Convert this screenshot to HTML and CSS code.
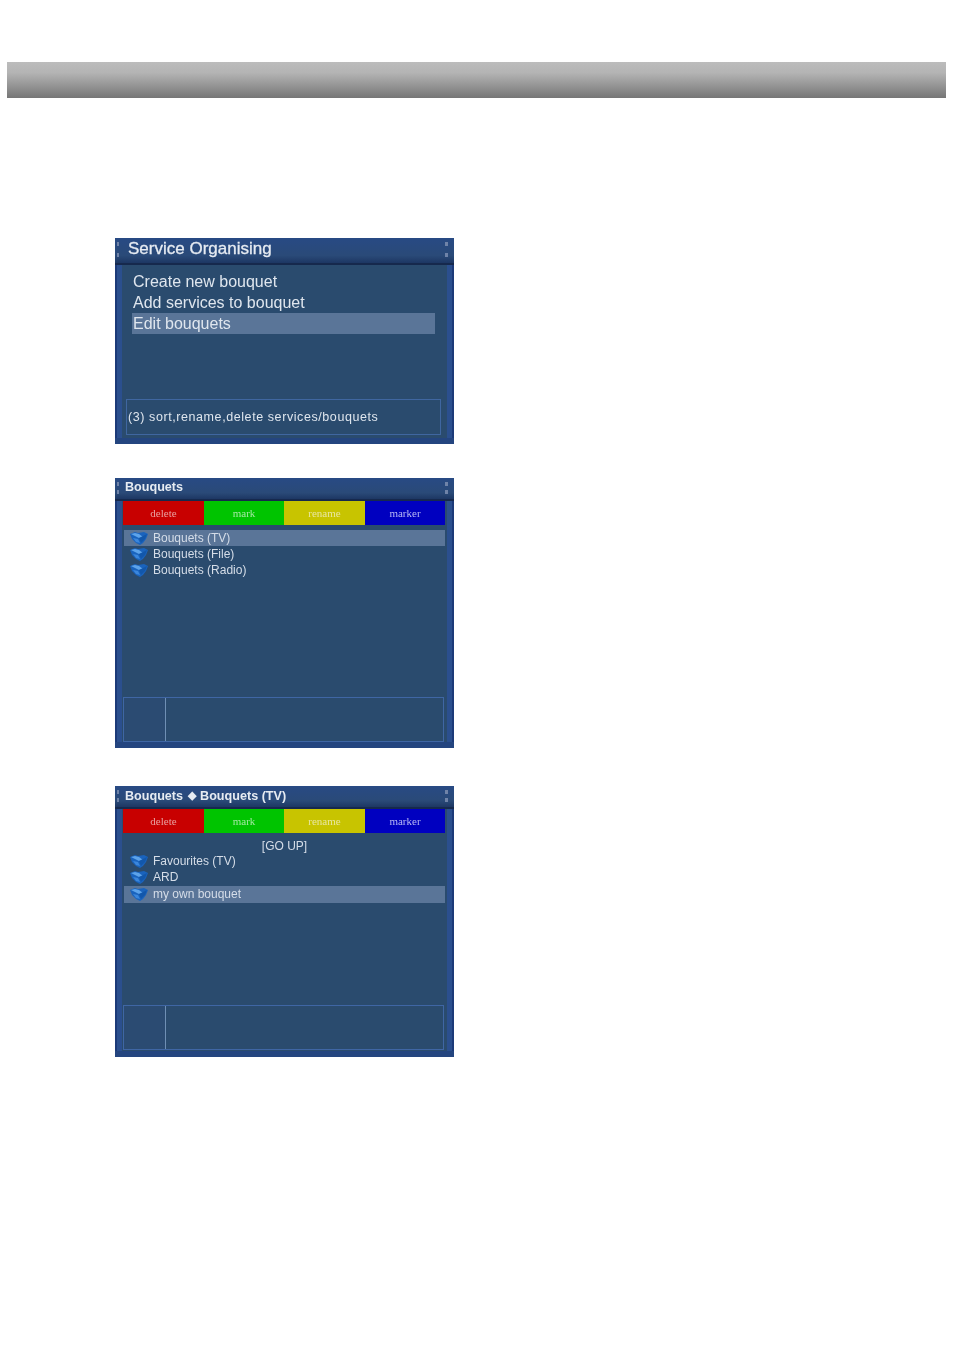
FILE: index.html
```html
<!DOCTYPE html>
<html lang="en">

<head>
    <meta charset="UTF-8" />
    <title>Service Organising</title>
    <link rel="stylesheet" href="styles.css">
</head>

<body>
    <svg class="icon-defs" width="0" height="0">
        <symbol id="folder" viewBox="0 0 18 14">
            <path d="M0 3 L5 1 L8 2 L14 1 L18 3 L16 8 L13 12 L10 14 L6 12 L2 8 Z" fill="#1a63bd" />
            <path d="M1 3 L5 2 L9 3 L13 6 L9 7 L5 5 Z" fill="#5da3ea" />
            <path d="M9 7 L17 3 L15 8 L11 12 Z" fill="#1257ab" />
            <path d="M3 7 L8 8 L10 12 L6 11 Z" fill="#3a86dc" />
        </symbol>
    </svg>

    <div class="top-bar"></div>

    <div class="screens">
        <div class="screen screen-menu">
            <div class="grips"></div>
            <div class="title title-large">Service Organising</div>
            <div class="menu-panel">
                <div class="menu-item">Create new bouquet</div>
                <div class="menu-item">Add services to bouquet</div>
                <div class="menu-item selected">Edit bouquets</div>
            </div>
            <div class="help-box">(3) sort,rename,delete services/bouquets</div>
        </div>

        <div class="screen screen-list">
            <div class="grips"></div>
            <div class="title">Bouquets</div>
            <div class="buttons">
                <div class="btn btn-red">delete</div>
                <div class="btn btn-green">mark</div>
                <div class="btn btn-yellow">rename</div>
                <div class="btn btn-blue">marker</div>
            </div>
            <div class="list">
                <div class="row selected"><svg class="folder"><use href="#folder" /></svg>Bouquets (TV)</div>
                <div class="row"><svg class="folder"><use href="#folder" /></svg>Bouquets (File)</div>
                <div class="row"><svg class="folder"><use href="#folder" /></svg>Bouquets (Radio)</div>
            </div>
            <div class="info-box">
                <div class="info-left"></div>
                <div class="info-right"></div>
            </div>
        </div>

        <div class="screen screen-list">
            <div class="grips"></div>
            <div class="title">Bouquets <span class="title-arrow">◆</span> Bouquets (TV)</div>
            <div class="buttons">
                <div class="btn btn-red">delete</div>
                <div class="btn btn-green">mark</div>
                <div class="btn btn-yellow">rename</div>
                <div class="btn btn-blue">marker</div>
            </div>
            <div class="list">
                <div class="row go-up">[GO UP]</div>
                <div class="row"><svg class="folder"><use href="#folder" /></svg>Favourites (TV)</div>
                <div class="row"><svg class="folder"><use href="#folder" /></svg>ARD</div>
                <div class="row selected"><svg class="folder"><use href="#folder" /></svg>my own bouquet</div>
            </div>
            <div class="info-box">
                <div class="info-left"></div>
                <div class="info-right"></div>
            </div>
        </div>
    </div>
</body>

</html>
```

FILE: styles.css
```css
body {
    margin: 0;
    background: #fff;
    font-family: 'Liberation Sans', Arial, sans-serif;
    color: #dfe6ee;
}

.icon-defs {
    position: absolute;
}

.top-bar {
    height: 36px;
    margin: 62px 8px 0 7px;
    background: linear-gradient(#bcbcbc, #b4b4b4 30%, #767676);
}

.screens {
    display: flex;
    flex-direction: column;
    gap: 34px;
    width: 339px;
    margin: 140px 0 0 115px;
}

.screen {
    position: relative;
    display: flex;
    flex-direction: column;
    box-sizing: border-box;
    padding: 0 7px;
    border-bottom: 6px solid #24457f;
    background: linear-gradient(90deg, #1c3a78 0 2px, #2b4f8e 2px 7px, #2a4b6e 7px calc(100% - 7px), #2b4f8e calc(100% - 7px) calc(100% - 2px), #1c3a78 calc(100% - 2px));
    --grip-low: 9px;
}

.screen-menu {
    height: 206px;
    --grip-low: 12px;
}

.screen-list {
    height: 270px;
}

.screen-list:last-child {
    height: 271px;
    margin-top: 4px;
}

/* little dots in the title corners */
.grips {
    position: absolute;
    z-index: 1;
    top: 3px;
    left: 2px;
    right: 6px;
    height: 18px;
    background:
        linear-gradient(#6f83a8, #6f83a8) left 0 top 1px / 2px 4px no-repeat,
        linear-gradient(#6f83a8, #6f83a8) left 0 top var(--grip-low) / 2px 4px no-repeat,
        linear-gradient(#6f83a8, #6f83a8) right 0 top 1px / 3px 4px no-repeat,
        linear-gradient(#6f83a8, #6f83a8) right 0 top var(--grip-low) / 3px 4px no-repeat;
    filter: blur(0.5px);
}

.title {
    height: 21px;
    margin: 0 -7px;
    padding-left: 10px;
    background: linear-gradient(#284a84, #2a4a78 70%, #1d3763);
    border-bottom: 2px solid #16294d;
    font-size: 12.6px;
    font-weight: bold;
    line-height: 18px;
    color: #e6ebf2;
    filter: blur(0.4px);
}

.title-arrow {
    margin: 0 1px;
    font-size: 11px;
    vertical-align: 1px;
}

.title-large {
    height: 25px;
    padding-left: 13px;
    font-size: 17px;
    font-weight: normal;
    line-height: 22px;
    -webkit-text-stroke: 0.3px #e6ebf2;
}

.menu-panel {
    height: 134px;
    padding: 6px 12px 0 10px;
    box-sizing: border-box;
}

.menu-item {
    height: 21px;
    padding-left: 1px;
    font-size: 16px;
    line-height: 21px;
    filter: blur(0.4px);
}

.help-box {
    height: 36px;
    margin: 0 6px 0 4px;
    padding-left: 1px;
    box-sizing: border-box;
    border: 1px solid #3f66a0;
    font-size: 12.5px;
    letter-spacing: 0.58px;
    line-height: 34px;
    white-space: nowrap;
    filter: blur(0.4px);
}

.selected {
    background: #5a7598;
}

.buttons {
    display: grid;
    grid-template-columns: 81px 80px 81px 80px;
    height: 24px;
    margin: 0 2px 0 1px;
}

.btn {
    font-family: 'Liberation Serif', serif;
    font-size: 11px;
    line-height: 24px;
    text-align: center;
    filter: blur(0.5px);
}

.btn-red {
    background: #c80000;
    color: #e8a0a0;
}

.btn-green {
    background: #00c400;
    color: #a0e8a0;
}

.btn-yellow {
    background: #c8c400;
    color: #e8e6a0;
}

.btn-blue {
    background: #0000c0;
    color: #b8b8f4;
}

.list {
    flex: 1;
    margin: 5px 2px 0 2px;
}

.row {
    display: flex;
    align-items: center;
    box-sizing: border-box;
    height: 16.4px;
    padding: 0 0 1px 6px;
    font-size: 12px;
    color: #d5dde8;
    filter: blur(0.4px);
}

.go-up {
    justify-content: center;
    height: 15.4px;
    padding: 0;
}

.folder {
    flex: none;
    width: 18px;
    height: 14px;
    margin-right: 5px;
}

.info-box {
    display: flex;
    height: 45px;
    margin: 0 3px 0 1px;
    box-sizing: border-box;
    border: 1px solid #3f66a4;
}

.screen-list:last-child .info-box {
    margin-bottom: 1px;
}

.info-left {
    width: 41px;
    border-right: 1px solid #6f8fb4;
    background: #2b4b72;
}

.info-right {
    flex: 1;
}
```
